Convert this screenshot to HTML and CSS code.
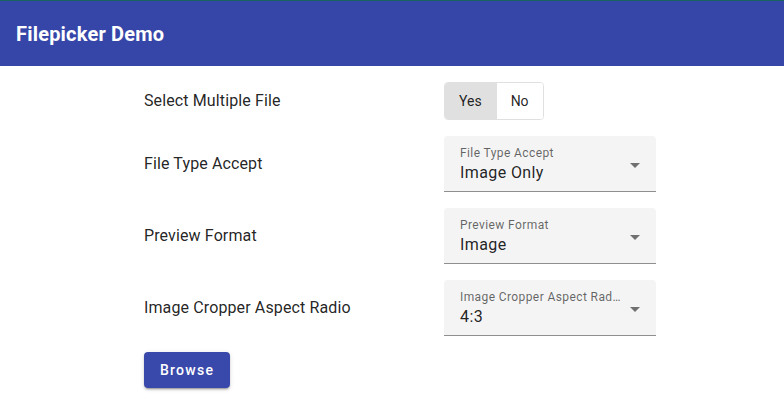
FILE: index.html
```html
<!DOCTYPE html>
<html>
<head>
<meta charset="utf-8">
<link rel="stylesheet" href="styles.css">
</head>
<body>
<header class="toolbar"><span class="title">Filepicker Demo</span></header>
<main class="content">
  <div class="label">Select Multiple File</div>
  <div class="toggle-group">
    <button class="toggle selected">Yes</button>
    <button class="toggle">No</button>
  </div>

  <div class="label">File Type Accept</div>
  <div class="field">
    <div class="field-text">
      <span class="field-label">File Type Accept</span>
      <span class="field-value">Image Only</span>
    </div>
    <span class="arrow"></span>
  </div>

  <div class="label">Preview Format</div>
  <div class="field">
    <div class="field-text">
      <span class="field-label">Preview Format</span>
      <span class="field-value">Image</span>
    </div>
    <span class="arrow"></span>
  </div>

  <div class="label">Image Cropper Aspect Radio</div>
  <div class="field">
    <div class="field-text">
      <span class="field-label">Image Cropper Aspect Radio</span>
      <span class="field-value">4:3</span>
    </div>
    <span class="arrow"></span>
  </div>

  <div class="actions"><button class="browse">Browse</button></div>
</main>
</body>
</html>
```
FILE: styles.css
```css
* { box-sizing: border-box; }
html, body { margin: 0; padding: 0; }
body {
  font-family: Roboto, "Liberation Sans", sans-serif;
  background: #ffffff;
  color: rgba(0,0,0,0.87);
  width: 784px;
  height: 412px;
  overflow: hidden;
}
.toolbar {
  height: 66px;
  background: #3646a8;
  border-top: 1px solid #17625d;
  display: flex;
  align-items: center;
  padding: 0 16px;
}
.title {
  color: #ffffff;
  font-size: 20px;
  font-weight: 700;
  letter-spacing: 0.2px;
}
.content {
  display: grid;
  grid-template-columns: 300px 212px;
  row-gap: 16px;
  padding: 16px 0 0 144px;
  align-items: center;
}
.label {
  font-size: 16px;
  line-height: 20px;
  letter-spacing: 0.12px;
}
.toggle-group {
  display: inline-flex;
  justify-self: start;
  height: 38px;
  border: 1px solid #e0e0e0;
  border-radius: 4px;
  overflow: hidden;
}
.toggle {
  font-family: inherit;
  font-size: 14px;
  color: rgba(0,0,0,0.87);
  background: #ffffff;
  border: none;
  padding: 0 14px;
  height: 36px;
  margin: 0;
}
.toggle + .toggle { border-left: 1px solid #e0e0e0; }
.toggle.selected { background: #e0e0e0; }
.field {
  height: 56px;
  background: #f4f4f4;
  border-radius: 4px 4px 0 0;
  border-bottom: 1px solid #8f8f8f;
  display: flex;
  align-items: center;
  padding: 0 16px;
}
.field-text {
  flex: 1;
  min-width: 0;
  display: flex;
  flex-direction: column;
  padding-top: 2px;
}
.field-label {
  font-size: 12px;
  line-height: 16px;
  letter-spacing: 0.4px;
  color: rgba(0,0,0,0.6);
  white-space: nowrap;
  overflow: hidden;
  text-overflow: ellipsis;
  padding-right: 8px;
}
.field-value {
  font-size: 16px;
  line-height: 24px;
  letter-spacing: 0.4px;
  color: rgba(0,0,0,0.87);
}
.arrow {
  width: 0;
  height: 0;
  border-left: 5px solid transparent;
  border-right: 5px solid transparent;
  border-top: 5px solid rgba(0,0,0,0.54);
  margin-top: 4px;
}
.actions { grid-column: 1 / 3; }
.browse {
  font-family: inherit;
  font-size: 14px;
  font-weight: 500;
  letter-spacing: 1.25px;
  color: #ffffff;
  background: #3949ab;
  border: none;
  border-radius: 4px;
  height: 36px;
  padding: 0 16px;
  box-shadow: 0 3px 1px -2px rgba(0,0,0,.2), 0 2px 2px 0 rgba(0,0,0,.14), 0 1px 5px 0 rgba(0,0,0,.12);
}
```
